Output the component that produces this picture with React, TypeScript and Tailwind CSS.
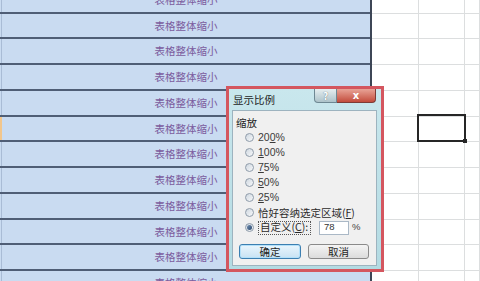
import React from 'react'

const rowCount = 12

function Radio({ checked }: { checked?: boolean }) {
  return (
    <span className="flex h-[9px] w-[9px] shrink-0 items-center justify-center rounded-full border border-[#8f9caa] bg-linear-to-br from-[#cfd8e0] to-[#f7f8fa]">
      {checked && <span className="h-[5px] w-[5px] rounded-full bg-linear-to-br from-[#6f8db0] to-[#2c4a6e]" />}
    </span>
  )
}

const presets = [
  { pre: '20', u: '0', post: '%' },
  { pre: '', u: '1', post: '00%' },
  { pre: '', u: '7', post: '5%' },
  { pre: '', u: '5', post: '0%' },
  { pre: '', u: '2', post: '5%' },
]

function ZoomDialog() {
  return (
    <div className="absolute left-[226px] top-[86px] flex h-[186px] w-[158px] flex-col border-[3px] border-[#d4565f] bg-linear-to-b from-[#c9e7ed] to-[#b3dbe3]">
      {/* title bar */}
      <div className="flex h-[21px] items-start justify-between">
        <span className="mt-[4px] pl-[4px] text-[10.5px] leading-[14px] text-[#1c1c1c]">显示比例</span>
        <div className="mr-[5px] flex">
          <div className="flex h-[14px] w-[23px] items-center justify-center rounded-bl-[4px] border border-t-0 border-[#6e8893] bg-linear-to-b from-[#e6eef0] to-[#adc3ca] text-[10px] font-bold leading-none text-white [text-shadow:0_0_1px_#3d5560]">
            ?
          </div>
          <div className="flex h-[14px] w-[39px] items-center justify-center rounded-br-[4px] border border-l-0 border-t-0 border-[#7d3c36] bg-linear-to-b from-[#e8a397] to-[#c24b3c] font-['DejaVu_Sans',sans-serif] text-[10px] font-bold leading-none text-white">
            x
          </div>
        </div>
      </div>

      {/* client */}
      <div className="mb-[3px] ml-[3px] mr-[4px] flex flex-1 flex-col border border-[#9db3bf] bg-[#f0f0f0] text-[10.5px] text-[#1e1e1e]">
        <div className="mt-[5px] h-[14px] pl-[3px] leading-[14px]">缩放</div>
        <div className="flex flex-col pl-[12px]">
          {presets.map((p, i) => (
            <div key={i} className="flex h-[15px] items-center gap-[4px]">
              <Radio />
              <span className="font-['Liberation_Sans',sans-serif] text-[10.5px] text-[#3a3a3a]">
                {p.pre}
                <span className="underline underline-offset-1">{p.u}</span>
                {p.post}
              </span>
            </div>
          ))}
          <div className="flex h-[15px] items-center gap-[4px]">
            <Radio />
            <span className="text-[#2a2a2a]">
              恰好容纳选定区域(<span className="underline underline-offset-1">F</span>)
            </span>
          </div>
          <div className="flex h-[15px] items-center gap-[4px]">
            <Radio checked />
            <span className="flex h-[14px] w-[53px] items-center border border-dotted border-[#555] pl-[1px] leading-none text-[#2a2a2a]">
              自定义(<span className="underline underline-offset-1">C</span>):
            </span>
            <div className="ml-[4px] flex h-[14px] w-[30px] items-center border border-[#aab8c6] bg-white pl-[4px] font-['Liberation_Sans',sans-serif] text-[9.5px] text-[#333]">
              78
            </div>
            <span className="ml-[-1px] font-['Liberation_Sans',sans-serif] text-[9.5px] text-[#444]">%</span>
          </div>
        </div>
        <div className="ml-[6px] mt-[9px] flex gap-[7px]">
          <div className="flex h-[15px] w-[62px] items-center justify-center rounded-[3px] border border-[#3c7fb1] bg-linear-to-b from-[#eaf6fd] to-[#c8e2f3] shadow-[inset_0_0_0_1px_#b3e0f9]">
            确定
          </div>
          <div className="flex h-[15px] w-[61px] items-center justify-center rounded-[3px] border border-[#8a8a8a] bg-linear-to-b from-[#f4f4f4] to-[#dcdcdc]">
            取消
          </div>
        </div>
      </div>
    </div>
  )
}

export default function App() {
  return (
    <div className="relative h-[281px] w-[480px] overflow-hidden bg-white font-['Noto_Sans_CJK_SC',sans-serif]">
      <div className="mt-[-12.25px] flex">
        {/* selected block */}
        <div className="flex w-[372px] flex-col border-r-2 border-[#3d4656]">
          {Array.from({ length: rowCount }).map((_, i) => (
            <div key={i} className="flex h-[25.75px] shrink-0 border-b-2 border-[#4f5e76] bg-[#c9dbf1]">
              <div className={i === 5 ? 'w-[2px] bg-[#f2c68c]' : 'w-[2px] border-r border-[#a9bcd6]'} />
              <div className="flex flex-1 items-center justify-center text-[10.5px] text-[#7b5c9d]">表格整体缩小</div>
            </div>
          ))}
        </div>
        {/* plain grid */}
        <div className="grid flex-1 grid-cols-[47px_46px_1fr]">
          {Array.from({ length: rowCount * 3 }).map((_, i) => (
            <div key={i} className="h-[25.75px] border-b border-r border-[#dcdedf]" />
          ))}
        </div>
      </div>

      {/* active cell */}
      <div className="absolute left-[417px] top-[114px] h-[28px] w-[49px] border-2 border-[#262626]">
        <div className="absolute bottom-[-3px] right-[-3px] h-[4px] w-[4px] bg-[#262626]" />
      </div>

      <ZoomDialog />
    </div>
  )
}
